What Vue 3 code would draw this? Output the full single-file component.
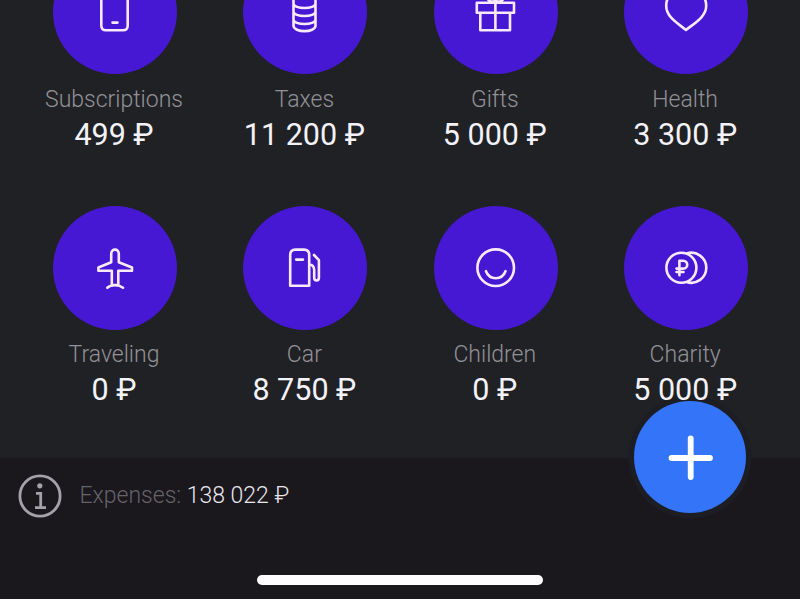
<script setup>
const categories = [
  { name: 'Subscriptions', value: '499 ₽', icon: 'M18.3 10V45.5Q18.3 50.3 23 50.3H40Q44.7 50.3 44.7 45.5V10M29.5 42.6H34.5' },
  { name: 'Taxes', value: '11 200 ₽', icon: 'M20.5 10V45.5C20.5 53 42.5 53 42.5 45.5V10M20.5 39.5C20.5 45.5 42.5 45.5 42.5 39.5M20.5 31.5C20.5 37.5 42.5 37.5 42.5 31.5M20.5 23.5C20.5 29.5 42.5 29.5 42.5 23.5' },
  { name: 'Gifts', value: '5 000 ₽', icon: 'M12.8 22.7H50V32.7H12.8ZM16.3 32.7V50.3H46V32.7M31.4 22.7V50.3M31.4 21.5Q23 22.5 24 17Q28 13 31.4 21.5Q35 13 39 17Q40 22.5 31.4 21.5' },
  { name: 'Health', value: '3 300 ₽', icon: 'M32 49.9C24 43.5 12.2 37 12.2 26C12.2 12 26 8 32 16C38 8 52.2 12 52.2 26C52.2 37 40 43.5 32 49.9Z' },
  { name: 'Traveling', value: '0 ₽', icon: 'M28.2 26.2V18C28.2 12.2 35.8 12.2 35.8 18V26.2L49 31.5V34.8H35.3V49H28.8V34.8H15.4V31.5ZM24.3 51.7Q27 49.3 32 49.3Q37 49.3 40 51.7' },
  { name: 'Car', value: '8 750 ₽', icon: 'M17.2 49.8V18.8Q17.2 13.6 22.4 13.6H31Q36.2 13.6 36.2 18.8V49.8ZM23.2 23.6H30M41 19L45.9 24.2V41.5C45.9 45.5 41.2 45.5 41.2 41.5V34Q41.2 29 36.2 28.3' },
  { name: 'Children', value: '0 ₽', icon: 'M50 31.7A18.3 18.3 0 1 1 13.4 31.7A18.3 18.3 0 1 1 50 31.7M22 35.2C25.5 44.5 38 44.5 41.5 35.2' },
  { name: 'Charity', value: '5 000 ₽', icon: 'M42.4 31.7A15 15 0 1 1 12.4 31.7A15 15 0 1 1 42.4 31.7M32.6 17.5A15 15 0 1 1 32.6 46M25.4 39.2V24.7H29C34.6 24.7 34.6 32.6 29 32.6H22.5M22.5 36H29.5' },
]
</script>

<template>
  <main class="screen">
    <section class="grid">
      <article v-for="c in categories" :key="c.name" class="category">
        <div class="disc">
          <svg viewBox="0 0 64 64"><path :d="c.icon" /></svg>
        </div>
        <div class="name">{{ c.name }}</div>
        <div class="value">{{ c.value }}</div>
      </article>
    </section>
    <footer class="footer">
      <div class="summary">
        <svg class="info" viewBox="0 0 44 44">
          <circle cx="22" cy="22" r="20.1" />
          <path d="M18 19.3H22.7V33.5M17 33.7H28" />
          <circle class="dot" cx="21.8" cy="11.8" r="2.6" />
        </svg>
        <p class="total">Expenses: <span>138 022 ₽</span></p>
      </div>
      <div class="home"></div>
    </footer>
    <button class="add" aria-label="Add">
      <svg viewBox="0 0 112 112"><path d="M37.5 57H76M56.7 37.5V76" /></svg>
    </button>
  </main>
</template>

<style>
body { background: #1a171d; }
</style>

<style scoped>
.screen {
  position: relative;
  display: flex;
  flex-direction: column;
  width: 800px;
  height: 599px;
  overflow: hidden;
  background: #1a171d;
  font-family: Roboto, sans-serif;
  font-weight: 300;
}
.grid {
  display: grid;
  grid-template-columns: repeat(4, 190.4px);
  grid-template-rows: 255.5px 252px;
  flex: none;
  height: 507.5px;
  margin-top: -50px;
  padding-left: 19.8px;
  box-sizing: border-box;
  background: #202125;
}
.category {
  display: flex;
  flex-direction: column;
  align-items: center;
}
.disc {
  display: flex;
  align-items: center;
  justify-content: center;
  flex: none;
  width: 124px;
  height: 124px;
  border-radius: 50%;
  background: #4718d3;
}
.disc svg {
  width: 64px;
  height: 64px;
  fill: none;
  stroke: #f9e9ff;
  stroke-width: 2.6;
  stroke-linecap: round;
  stroke-linejoin: round;
}
.name {
  margin-top: 11.6px;
  margin-right: 2px;
  line-height: 28px;
  font-size: 23px;
  color: #929197;
  white-space: nowrap;
}
.value {
  position: relative;
  z-index: 1;
  margin-top: 3px;
  margin-right: 2px;
  line-height: 36px;
  font-size: 30.5px;
  font-weight: 400;
  color: #f3f2f8;
  white-space: nowrap;
}
.footer {
  display: flex;
  flex-direction: column;
  align-items: center;
  justify-content: space-between;
  flex: 1;
  padding: 16px 0 14px;
}
.summary {
  display: flex;
  align-items: center;
  align-self: stretch;
  gap: 18px;
  padding-left: 17.5px;
}
.info {
  width: 44px;
  height: 44px;
  fill: none;
  stroke: #a5a3a9;
  stroke-width: 2.8;
}
.info .dot {
  fill: #a5a3a9;
  stroke: none;
}
.total {
  margin: 0;
  padding-top: 1px;
  font-size: 23px;
  line-height: 28px;
  color: #65636a;
}
.total span { color: #e8e7ee; }
.home {
  width: 286px;
  height: 10px;
  border-radius: 5px;
  background: #fffcff;
}
.add {
  position: absolute;
  left: 634px;
  top: 401px;
  width: 112px;
  height: 112px;
  padding: 0;
  border: 0;
  border-radius: 50%;
  background: #3374f8;
  box-shadow: 0 0 0 5.5px #1c1e23;
}
.add svg {
  display: block;
  width: 112px;
  height: 112px;
  fill: none;
  stroke: #fff;
  stroke-width: 5.8;
  stroke-linecap: round;
}
</style>
